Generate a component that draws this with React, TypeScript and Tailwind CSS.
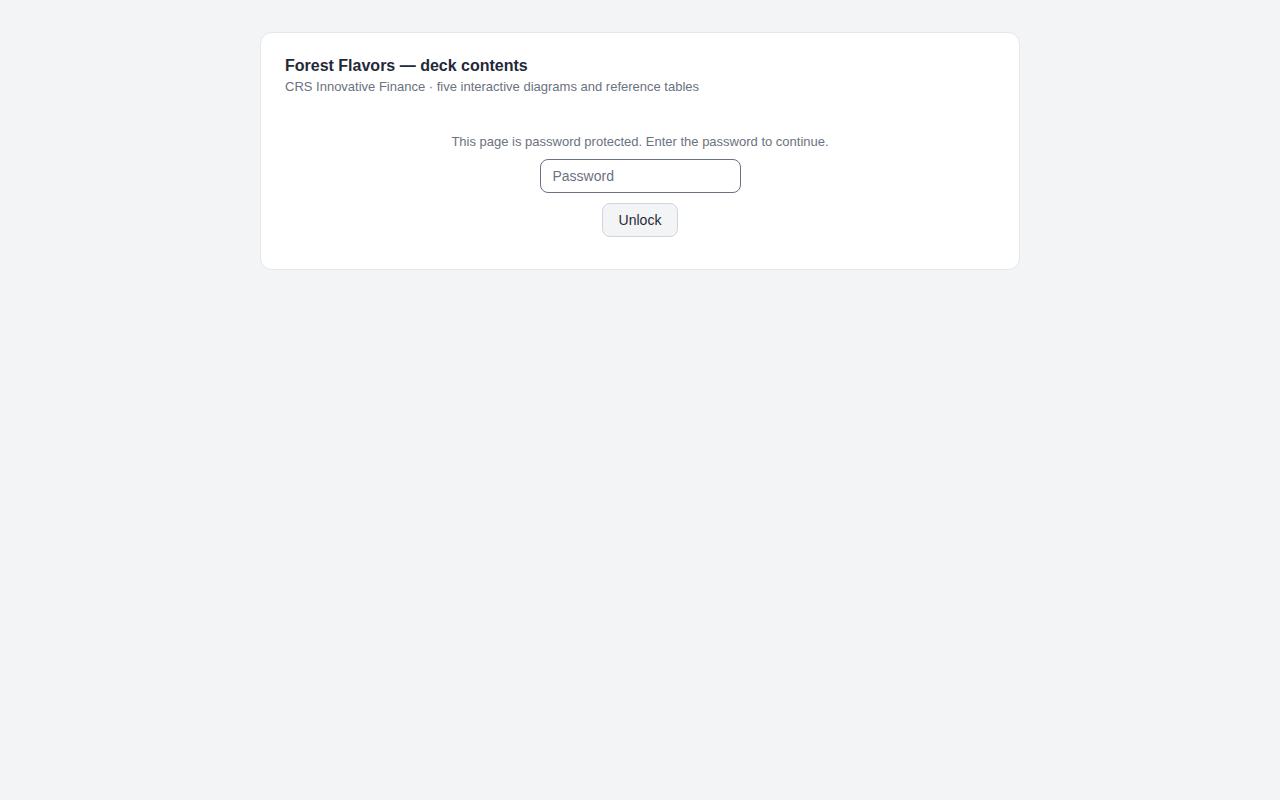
import React from "react";

export default function App() {
  return (
    <div className="min-h-screen bg-[#f3f4f6] pt-8" style={{ fontFamily: '"Liberation Sans", Arial, sans-serif' }}>
      <div className="mx-auto w-[760px] rounded-xl border border-[#e5e7eb] bg-white px-6 pt-[23px] pb-8">
        <h1 className="text-[16px] font-bold leading-[19px] text-[#1f2937]">Forest Flavors — deck contents</h1>
        <p className="mt-[4px] text-[13px] leading-[16px] text-[#6b7280]">
          CRS Innovative Finance · five interactive diagrams and reference tables
        </p>
        <div className="mt-[39px] flex flex-col items-center">
          <p className="text-[13px] leading-[16px] text-[#6b7280]">
            This page is password protected. Enter the password to continue.
          </p>
          <input
            type="password"
            placeholder="Password"
            className="mt-[9px] h-[34px] w-[201px] rounded-lg border border-[#6b7280] bg-white px-3 text-[14px] text-[#1f2937] placeholder:text-[#6b7280] outline-none"
          />
          <button className="mt-[10px] h-[34px] w-[76px] rounded-lg border border-[#d1d5db] bg-[#f3f4f6] text-[14px] text-[#1f2937]">
            Unlock
          </button>
        </div>
      </div>
    </div>
  );
}
